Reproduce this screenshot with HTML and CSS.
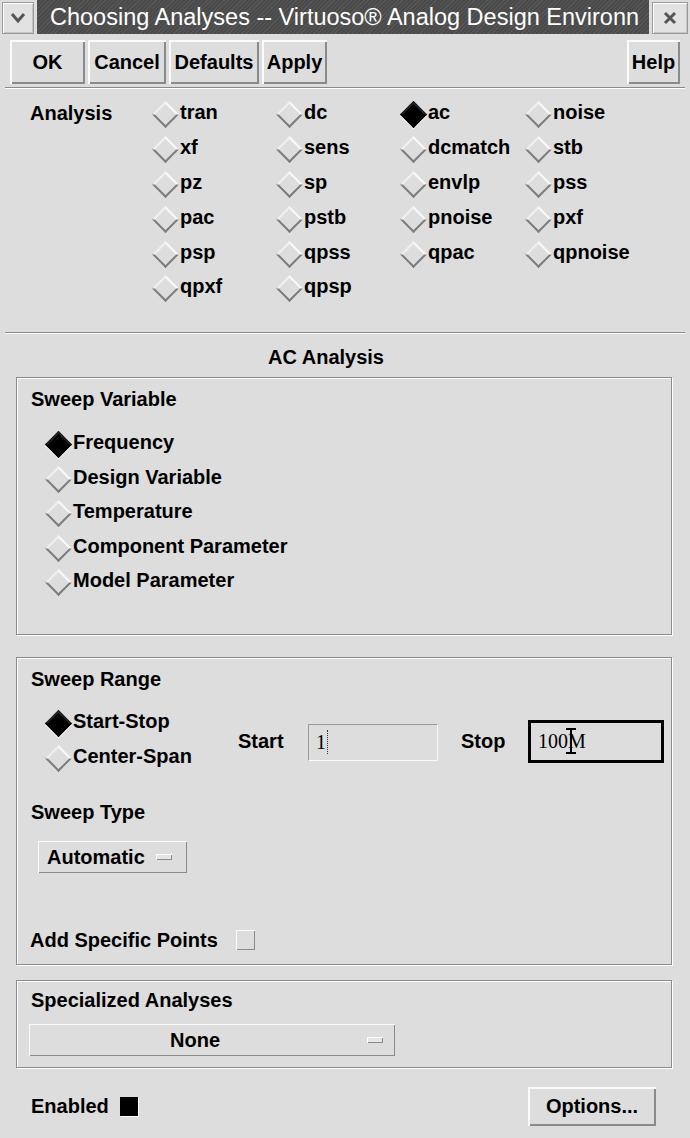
FILE: index.html
```html
<!DOCTYPE html>
<html>
<head>
<meta charset="utf-8">
<title>Choosing Analyses</title>
<link rel="stylesheet" href="styles.css">
</head>
<body>
<div class="titlebar">
  <div class="tbtn">
    <svg width="16" height="12" viewBox="0 0 16 12"><polyline points="2,2 8,9 14,2" fill="none" stroke="#555" stroke-width="3"/></svg>
  </div>
  <div class="title">Choosing Analyses -- Virtuoso® Analog Design Environn</div>
  <div class="tbtn tbtn-r">
    <svg width="14" height="14" viewBox="0 0 14 14"><path d="M2 2 L12 12 M12 2 L2 12" stroke="#555" stroke-width="3"/></svg>
  </div>
</div>

<div class="toolbar">
  <button class="btn w-ok">OK</button>
  <button class="btn w-cancel">Cancel</button>
  <button class="btn w-defaults">Defaults</button>
  <button class="btn w-apply">Apply</button>
  <button class="btn w-help">Help</button>
</div>
<div class="hsep sep-top"></div>

<div class="analysis">
  <div class="alabel">Analysis</div>
  <div class="radio"><span class="dia"></span>tran</div>
  <div class="radio"><span class="dia"></span>dc</div>
  <div class="radio"><span class="dia on"></span>ac</div>
  <div class="radio"><span class="dia"></span>noise</div>
  <div class="radio"><span class="dia"></span>xf</div>
  <div class="radio"><span class="dia"></span>sens</div>
  <div class="radio"><span class="dia"></span>dcmatch</div>
  <div class="radio"><span class="dia"></span>stb</div>
  <div class="radio"><span class="dia"></span>pz</div>
  <div class="radio"><span class="dia"></span>sp</div>
  <div class="radio"><span class="dia"></span>envlp</div>
  <div class="radio"><span class="dia"></span>pss</div>
  <div class="radio"><span class="dia"></span>pac</div>
  <div class="radio"><span class="dia"></span>pstb</div>
  <div class="radio"><span class="dia"></span>pnoise</div>
  <div class="radio"><span class="dia"></span>pxf</div>
  <div class="radio"><span class="dia"></span>psp</div>
  <div class="radio"><span class="dia"></span>qpss</div>
  <div class="radio"><span class="dia"></span>qpac</div>
  <div class="radio"><span class="dia"></span>qpnoise</div>
  <div class="radio"><span class="dia"></span>qpxf</div>
  <div class="radio"><span class="dia"></span>qpsp</div>
</div>
<div class="hsep sep-mid"></div>

<div class="form-title">AC Analysis</div>

<div class="group g-var">
  <div class="gtitle">Sweep Variable</div>
  <div class="vlist">
    <div class="radio"><span class="dia on"></span>Frequency</div>
    <div class="radio"><span class="dia"></span>Design Variable</div>
    <div class="radio"><span class="dia"></span>Temperature</div>
    <div class="radio"><span class="dia"></span>Component Parameter</div>
    <div class="radio"><span class="dia"></span>Model Parameter</div>
  </div>
</div>

<div class="group g-range">
  <div class="gtitle">Sweep Range</div>
  <div class="range-row">
    <div class="rlist">
      <div class="radio"><span class="dia on"></span>Start-Stop</div>
      <div class="radio"><span class="dia"></span>Center-Span</div>
    </div>
    <div class="fields">
      <div class="flabel f-start">Start</div>
      <div class="field f-in-start"><span class="val">1</span><span class="tcursor"></span></div>
      <div class="flabel f-stop">Stop</div>
      <div class="field f-in-stop"><span class="val">100M</span>
        <svg class="ibeam" width="12" height="26" viewBox="0 0 12 26"><path d="M1 1 H11 M6 1 V25 M1 25 H11" stroke="#000" stroke-width="2" fill="none"/></svg>
      </div>
    </div>
  </div>
  <div class="gtitle t-type">Sweep Type</div>
  <div class="dropdown dd-auto"><span class="ddtext">Automatic</span><span class="ind"></span></div>
  <div class="points-row"><span>Add Specific Points</span><span class="check"></span></div>
</div>

<div class="group g-spec">
  <div class="gtitle">Specialized Analyses</div>
  <div class="dropdown dd-none"><span class="ddtext">None</span><span class="ind"></span></div>
</div>

<div class="footer">
  <span>Enabled</span><span class="enabled-box"></span>
  <button class="btn w-options">Options...</button>
</div>
</body>
</html>
```
FILE: styles.css
```css
* { box-sizing: border-box; }
html, body { margin: 0; padding: 0; }
body {
  width: 690px;
  height: 1138px;
  overflow: hidden;
  background: #dddddd;
  font-family: "Liberation Sans", Arial, sans-serif;
  font-weight: bold;
  font-size: 20px;
  color: #000;
}

/* title bar */
.titlebar {
  height: 36px;
  display: flex;
  gap: 3px;
  padding: 0 2px;
  align-items: flex-start;
}
.tbtn {
  width: 32px;
  height: 32px;
  margin-top: 2px;
  background: #e2e2e2;
  border: 1px solid #9a9a9a;
  box-shadow: inset 1px 1px 0 #fff, inset -1px -1px 0 #c4c4c4;
  display: flex;
  align-items: center;
  justify-content: center;
}
.tbtn-r { width: 36px; }
.title {
  flex: 1;
  height: 34px;
  background-color: #4a4a4a;
  background-image: repeating-linear-gradient(135deg, rgba(255,255,255,0.07) 0 1px, transparent 1px 3px);
  color: #fff;
  font-weight: normal;
  font-size: 23.5px;
  line-height: 34px;
  padding-left: 13px;
  white-space: nowrap;
  overflow: hidden;
}

/* buttons */
.btn {
  font: inherit;
  color: #000;
  height: 44px;
  padding: 0;
  border: none;
  background: #dddddd;
  box-shadow: inset 2px 2px 0 #fbfbfb, inset -2px -2px 0 #8a8a8a;
  text-align: center;
}
.toolbar {
  display: flex;
  gap: 3px;
  padding: 4px 10px 0 10px;
  height: 48px;
}
.w-ok { width: 75px; }
.w-cancel { width: 78px; }
.w-defaults { width: 90px; }
.w-apply { width: 65px; }
.w-help { width: 53px; margin-left: auto; }

.hsep {
  height: 2px;
  margin: 0 5px;
  border-top: 1px solid #8a8a8a;
  border-bottom: 1px solid #fff;
}
.sep-top { margin-top: 3px; }
.sep-mid { margin-top: 28px; }

/* radio diamonds */
.radio {
  display: flex;
  align-items: center;
  gap: 4px;
  white-space: nowrap;
}
.dia {
  width: 25px;
  height: 25px;
  flex: none;
  position: relative;
}
.dia::before {
  content: "";
  position: absolute;
  left: 5px;
  top: 5px;
  width: 15px;
  height: 15px;
  transform: rotate(45deg);
  border-top: 2px solid #fafafa;
  border-left: 2px solid #f0f0f0;
  border-right: 2px solid #7c7c7c;
  border-bottom: 2px solid #7c7c7c;
  background: #dddddd;
}
.dia.on::before {
  background: #000;
  border-color: #222 #000 #000 #222;
  box-shadow: 1px 1px 0 #fff;
}

/* analysis grid */
.analysis {
  display: grid;
  grid-template-columns: 121px 124px 124px 125px 140px;
  grid-auto-rows: 34.8px;
  padding: 6.5px 0 0 30px;
}
.alabel {
  grid-column: 1;
  grid-row: 1 / span 6;
  line-height: 34.8px;
}

.form-title {
  text-align: center;
  line-height: 24px;
  margin-top: 11px;
  padding-right: 38px;
}

/* groups */
.group {
  margin: 8px 18px 0 16px;
  border: 1px solid #8c8c8c;
  box-shadow: inset 1px 1px 0 #fff, 1px 1px 0 #fff;
  padding: 9px 14px;
}
.gtitle { line-height: 24px; }
.g-var { height: 258px; }
.vlist { margin-top: 14px; padding-left: 13px; }
.vlist .radio { height: 34.5px; }

.g-range { margin-top: 22px; height: 308px; }
.range-row {
  display: flex;
  margin-top: 13px;
}
.rlist { width: 193px; margin-left: 13px; flex: none; }
.rlist .radio { height: 35px; }
.fields {
  display: flex;
  align-items: center;
  padding-top: 3px;
  flex: none;
}
.flabel { line-height: 24px; flex: none; }
.f-start { width: 70px; margin-left: 1px; }
.f-stop { width: 67px; margin-left: 23px; }
.field {
  position: relative;
  flex: none;
  background: #dddddd;
  font-family: "Liberation Serif", "Times New Roman", serif;
  font-weight: normal;
  font-size: 20px;
  display: flex;
  align-items: center;
}
.f-in-start {
  width: 130px;
  height: 37px;
  border-top: 1px solid #9a9a9a;
  border-left: 1px solid #9a9a9a;
  border-bottom: 1px solid #fafafa;
  border-right: 1px solid #fafafa;
  padding-left: 7px;
  margin-top: 3px;
}
.tcursor {
  width: 0;
  height: 24px;
  border-left: 1px dotted #333;
  margin-left: 1px;
}
.f-in-stop {
  width: 136px;
  height: 43px;
  border: 3px solid #000;
  padding-left: 7px;
  margin-top: 1px;
}
.ibeam {
  position: absolute;
  left: 34px;
  top: 5px;
}

.t-type { margin-top: 26px; }
.dropdown {
  display: flex;
  align-items: center;
  height: 32px;
  background: #dddddd;
  box-shadow: inset 1px 1px 0 #fbfbfb, inset -1px -1px 0 #8a8a8a;
}
.ind {
  width: 16px;
  height: 6px;
  flex: none;
  background: #e6e6e6;
  box-shadow: inset 1px 1px 0 #fff, inset -1px -1px 0 #8a8a8a;
}
.dd-auto {
  width: 149px;
  margin: 17px 0 0 7px;
  padding-left: 9px;
}
.dd-auto .ind { margin-left: 11px; }
.dd-none {
  width: 366px;
  margin: 12px 0 0 -2px;
}
.dd-none .ddtext { width: 332px; text-align: center; }
.dd-none .ind { margin-left: 6px; }

.points-row {
  display: flex;
  align-items: center;
  margin: 55px 0 0 -1px;
  line-height: 24px;
}
.check {
  width: 19px;
  height: 20px;
  margin-left: 18px;
  box-shadow: inset 1px 1px 0 #fbfbfb, inset -1px -1px 0 #8a8a8a;
}

.g-spec {
  margin-top: 15px;
  padding: 7px 14px 11px;
}

.footer {
  display: flex;
  align-items: center;
  height: 39px;
  margin-top: 19px;
  padding: 0 34px 0 31px;
}
.enabled-box {
  width: 18px;
  height: 19px;
  background: #000;
  margin-left: 11px;
  box-shadow: 1px 1px 0 #fff;
}
.w-options {
  width: 128px;
  height: 39px;
  margin-left: auto;
}
```
